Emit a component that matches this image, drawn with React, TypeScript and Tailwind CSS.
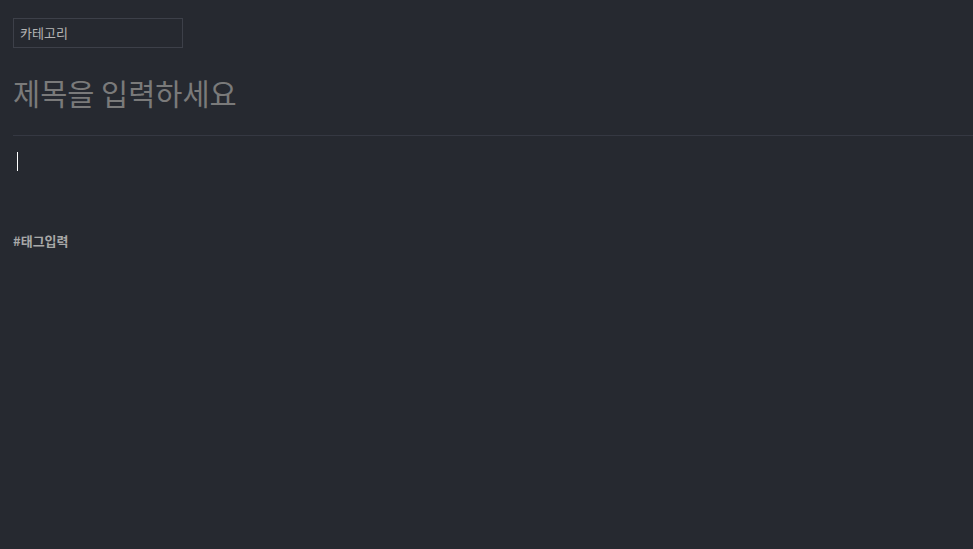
export default function App() {
  return (
    <div
      className="min-h-[549px] w-full bg-[#262930] pl-[13px]"
      style={{ fontFamily: '"Noto Sans CJK KR", "Noto Sans", sans-serif' }}
    >
      <div className="pt-[18px]">
        <input
          placeholder="카테고리"
          className="h-[30px] w-[170px] border border-[#3d4049] bg-transparent px-[6px] pb-[2px] text-[13px] text-[#c8c8c8] outline-none placeholder:text-[#b4b4b4]"
        />
      </div>
      <input
        placeholder="제목을 입력하세요"
        className="mt-[22px] block h-[44px] w-full bg-transparent text-[29.5px] text-[#888] outline-none placeholder:text-[#7a7a7a]"
      />
      <div className="mt-[21px] h-px bg-[#353842]" />
      <div className="h-[92px] pl-[4px] pt-[16px]">
        <div className="h-[19px] w-px bg-white" />
      </div>
      <input
        placeholder="#태그입력"
        className="block h-[24px] bg-transparent text-[13px] font-bold text-[#aaa] outline-none placeholder:text-[#a8a8a8]"
      />
    </div>
  )
}
